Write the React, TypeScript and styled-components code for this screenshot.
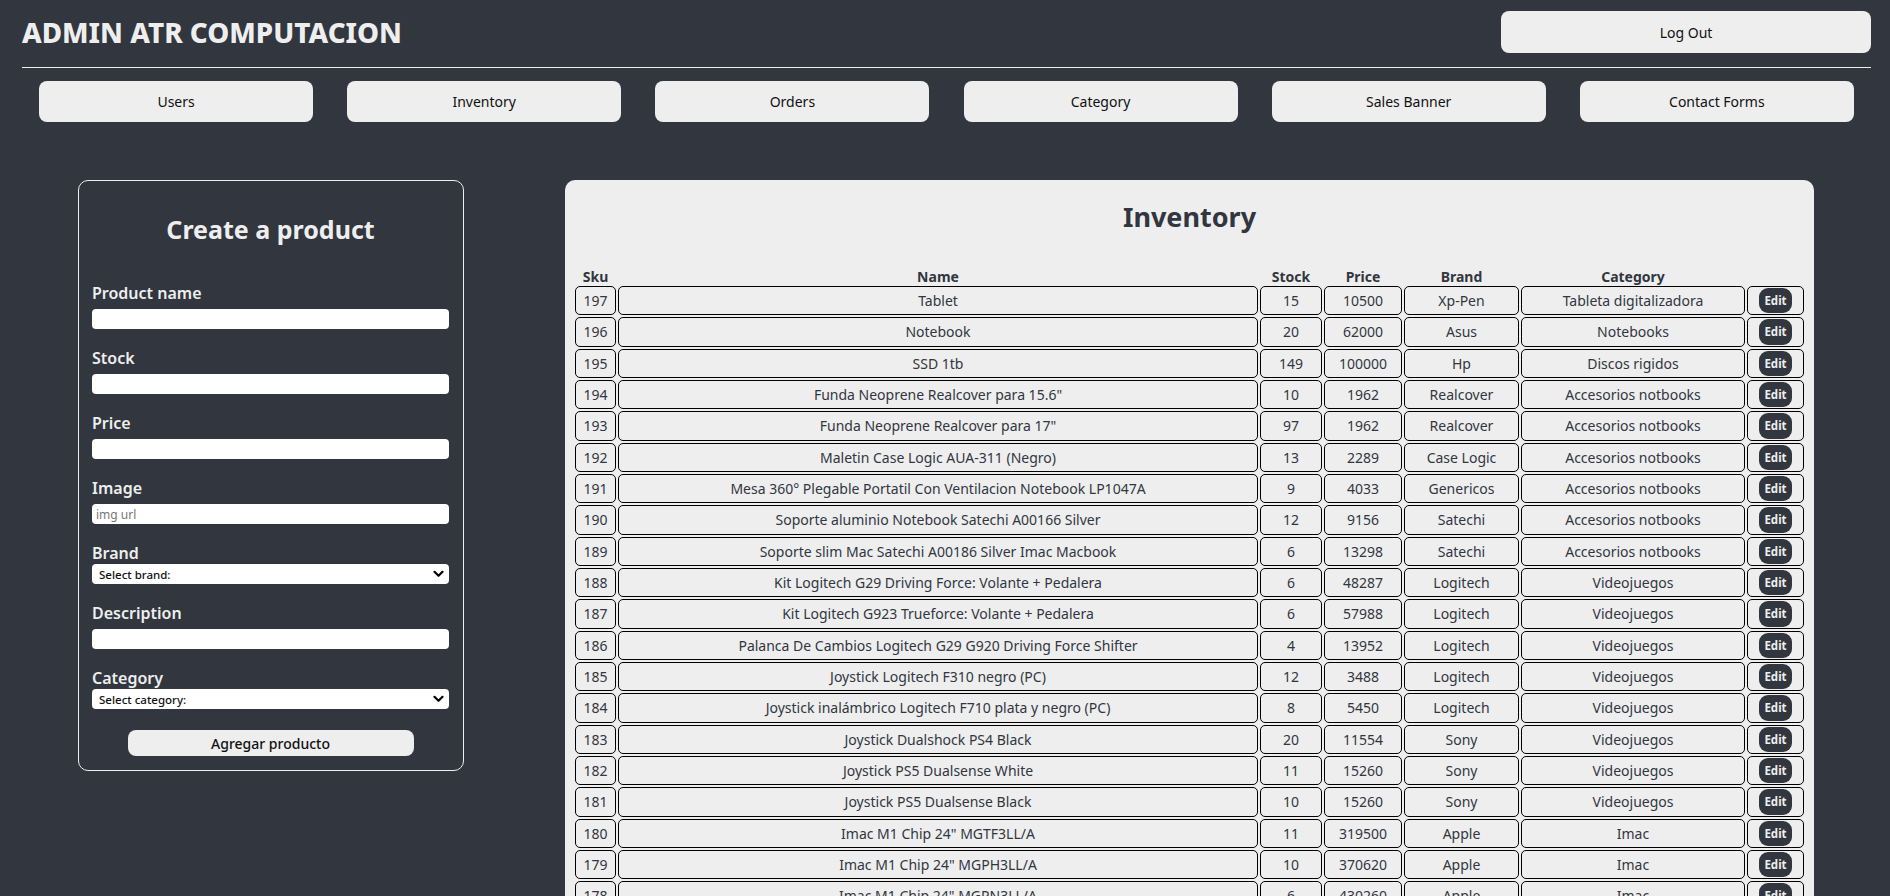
import React from "react";
import styled, { createGlobalStyle } from "styled-components";

const GlobalStyle = createGlobalStyle`
  html, body { margin: 0; padding: 0; }
  html::-webkit-scrollbar { width: 0; height: 0; }
  body {
    background: #31363f;
    font-family: "Noto Sans", "Open Sans", sans-serif;
    color: #eeeeee;
  }
  * { box-sizing: border-box; }
`;

const Header = styled.header`
  padding: 0 19px 0 22px;
`;

const TopRow = styled.div`
  display: flex;
  justify-content: space-between;
  align-items: center;
  padding-top: 11px;
`;

const Brand = styled.h1`
  margin: 0;
  font-size: 27.8px;
  font-weight: 800;
  line-height: 38px;
  color: #eeeeee;
`;

const LogOut = styled.button`
  width: 370px;
  height: 42px;
  border: none;
  border-radius: 8px;
  background: #eeeeee;
  color: #111;
  font-family: inherit;
  font-size: 14px;
  cursor: pointer;
`;

const Rule = styled.hr`
  margin: 14px 0 0;
  border: none;
  border-top: 1px solid #eeeeee;
  height: 0;
`;

const Nav = styled.nav`
  display: flex;
  justify-content: space-around;
  margin-top: 13px;
`;

const NavButton = styled.button`
  width: 274px;
  height: 41px;
  border: none;
  border-radius: 8px;
  background: #eeeeee;
  color: #111;
  font-family: inherit;
  font-size: 14px;
  cursor: pointer;
`;

const Main = styled.main`
  display: flex;
  align-items: flex-start;
  gap: 101px;
  padding: 58px 76px 0 78px;
`;

const FormPanel = styled.form`
  flex: 0 0 386px;
  border: 1px solid #eeeeee;
  border-radius: 10px;
  padding: 0 14px 14px 13px;
  display: flex;
  flex-direction: column;
`;

const FormTitle = styled.h2`
  margin: 31px 0 36px;
  text-align: center;
  font-size: 25px;
  line-height: 34px;
  font-weight: 700;
  color: #eeeeee;
`;

const Field = styled.div`
  display: flex;
  flex-direction: column;
  margin-bottom: 18px;
`;

const Label = styled.label`
  font-size: 16px;
  line-height: 22px;
  font-weight: 600;
  color: #eeeeee;
`;

const TextInput = styled.input`
  margin-top: 5px;
  height: 20px;
  border: none;
  border-radius: 4px;
  background: #ffffff;
  padding: 0 4px;
  font-family: inherit;
  font-size: 12px;
  color: #111;
  outline: none;
  &::placeholder { color: #777; }
`;

const SelectWrap = styled.div`
  position: relative;
  margin-top: 0;
`;

const Select = styled.select`
  appearance: none;
  -webkit-appearance: none;
  display: block;
  width: 100%;
  height: 20px;
  border: none;
  border-radius: 4px;
  background: #ffffff;
  padding: 0 24px 0 7px;
  font-family: inherit;
  font-size: 11.5px;
  font-weight: 500;
  color: #111;
  outline: none;
`;

const Chevron = styled.svg`
  position: absolute;
  right: 5px;
  top: 50%;
  width: 11px;
  height: 8px;
  transform: translateY(-50%);
  pointer-events: none;
`;

const SubmitButton = styled.button`
  align-self: center;
  margin-top: 3px;
  width: 286px;
  height: 26px;
  border: none;
  border-radius: 8px;
  background: #eeeeee;
  color: #111;
  font-family: inherit;
  font-size: 14px;
  font-weight: 500;
  cursor: pointer;
`;

const InventoryPanel = styled.section`
  flex: 1;
  background: #eeeeee;
  border-radius: 10px;
  padding: 18px 8px 12px;
  color: #31363f;
`;

const InventoryTitle = styled.h2`
  margin: 0 0 32px;
  text-align: center;
  font-size: 27px;
  line-height: 37px;
  font-weight: 700;
`;

const Table = styled.table`
  width: 100%;
  table-layout: fixed;
  border-collapse: separate;
  border-spacing: 2px;
  font-size: 14px;
  color: #31363f;
`;

const Th = styled.th`
  padding: 1px;
  font-weight: 700;
  line-height: 13px;
  text-align: center;
`;

const Td = styled.td`
  padding: 1px;
  border: 1px solid #000;
  border-radius: 5px;
  text-align: center;
  vertical-align: middle;
  line-height: 19px;
  height: 29.33px;
  white-space: nowrap;
  overflow: hidden;
`;

const EditButton = styled.button`
  display: block;
  margin: 0 auto;
  width: 33px;
  height: 25.33px;
  border: none;
  border-radius: 9px;
  background: #31363f;
  color: #eeeeee;
  font-family: inherit;
  font-size: 11.5px;
  font-weight: 700;
  padding: 0;
  cursor: pointer;
`;

type Product = [number, string, number, number, string, string];

const products: Product[] = [
  [197, "Tablet", 15, 10500, "Xp-Pen", "Tableta digitalizadora"],
  [196, "Notebook", 20, 62000, "Asus", "Notebooks"],
  [195, "SSD 1tb", 149, 100000, "Hp", "Discos rigidos"],
  [194, "Funda Neoprene Realcover para 15.6\"", 10, 1962, "Realcover", "Accesorios notbooks"],
  [193, "Funda Neoprene Realcover para 17\"", 97, 1962, "Realcover", "Accesorios notbooks"],
  [192, "Maletin Case Logic AUA-311 (Negro)", 13, 2289, "Case Logic", "Accesorios notbooks"],
  [191, "Mesa 360° Plegable Portatil Con Ventilacion Notebook LP1047A", 9, 4033, "Genericos", "Accesorios notbooks"],
  [190, "Soporte aluminio Notebook Satechi A00166 Silver", 12, 9156, "Satechi", "Accesorios notbooks"],
  [189, "Soporte slim Mac Satechi A00186 Silver Imac Macbook", 6, 13298, "Satechi", "Accesorios notbooks"],
  [188, "Kit Logitech G29 Driving Force: Volante + Pedalera", 6, 48287, "Logitech", "Videojuegos"],
  [187, "Kit Logitech G923 Trueforce: Volante + Pedalera", 6, 57988, "Logitech", "Videojuegos"],
  [186, "Palanca De Cambios Logitech G29 G920 Driving Force Shifter", 4, 13952, "Logitech", "Videojuegos"],
  [185, "Joystick Logitech F310 negro (PC)", 12, 3488, "Logitech", "Videojuegos"],
  [184, "Joystick inalámbrico Logitech F710 plata y negro (PC)", 8, 5450, "Logitech", "Videojuegos"],
  [183, "Joystick Dualshock PS4 Black", 20, 11554, "Sony", "Videojuegos"],
  [182, "Joystick PS5 Dualsense White", 11, 15260, "Sony", "Videojuegos"],
  [181, "Joystick PS5 Dualsense Black", 10, 15260, "Sony", "Videojuegos"],
  [180, "Imac M1 Chip 24\" MGTF3LL/A", 11, 319500, "Apple", "Imac"],
  [179, "Imac M1 Chip 24\" MGPH3LL/A", 10, 370620, "Apple", "Imac"],
  [178, "Imac M1 Chip 24\" MGPN3LL/A", 6, 430260, "Apple", "Imac"],
];

const navItems = ["Users", "Inventory", "Orders", "Category", "Sales Banner", "Contact Forms"];

function SelectField({ label, placeholder }: { label: string; placeholder: string }) {
  return (
    <Field>
      <Label>{label}</Label>
      <SelectWrap>
        <Select defaultValue="">
          <option value="">{placeholder}</option>
        </Select>
        <Chevron viewBox="0 0 11 8" fill="none">
          <path d="M1.5 1.8 L5.5 5.8 L9.5 1.8" stroke="#000" strokeWidth="2.2" strokeLinecap="round" strokeLinejoin="round" />
        </Chevron>
      </SelectWrap>
    </Field>
  );
}

export default function App() {
  return (
    <>
      <GlobalStyle />
      <Header>
        <TopRow>
          <Brand>ADMIN ATR COMPUTACION</Brand>
          <LogOut>Log Out</LogOut>
        </TopRow>
        <Rule />
        <Nav>
          {navItems.map((n) => (
            <NavButton key={n}>{n}</NavButton>
          ))}
        </Nav>
      </Header>
      <Main>
        <FormPanel onSubmit={(e) => e.preventDefault()}>
          <FormTitle>Create a product</FormTitle>
          <Field>
            <Label>Product name</Label>
            <TextInput type="text" />
          </Field>
          <Field>
            <Label>Stock</Label>
            <TextInput type="text" />
          </Field>
          <Field>
            <Label>Price</Label>
            <TextInput type="text" />
          </Field>
          <Field>
            <Label>Image</Label>
            <TextInput type="text" placeholder="img url" />
          </Field>
          <SelectField label="Brand" placeholder="Select brand:" />
          <Field>
            <Label>Description</Label>
            <TextInput type="text" />
          </Field>
          <SelectField label="Category" placeholder="Select category:" />
          <SubmitButton type="submit">Agregar producto</SubmitButton>
        </FormPanel>
        <InventoryPanel>
          <InventoryTitle>Inventory</InventoryTitle>
          <Table>
            <colgroup>
              <col style={{ width: 41 }} />
              <col />
              <col style={{ width: 62 }} />
              <col style={{ width: 78 }} />
              <col style={{ width: 115 }} />
              <col style={{ width: 224 }} />
              <col style={{ width: 57 }} />
            </colgroup>
            <thead>
              <tr>
                <Th>Sku</Th>
                <Th>Name</Th>
                <Th>Stock</Th>
                <Th>Price</Th>
                <Th>Brand</Th>
                <Th>Category</Th>
                <Th></Th>
              </tr>
            </thead>
            <tbody>
              {products.map(([sku, name, stock, price, brand, cat]) => (
                <tr key={sku}>
                  <Td>{sku}</Td>
                  <Td>{name}</Td>
                  <Td>{stock}</Td>
                  <Td>{price}</Td>
                  <Td>{brand}</Td>
                  <Td>{cat}</Td>
                  <Td>
                    <EditButton>Edit</EditButton>
                  </Td>
                </tr>
              ))}
            </tbody>
          </Table>
        </InventoryPanel>
      </Main>
    </>
  );
}
